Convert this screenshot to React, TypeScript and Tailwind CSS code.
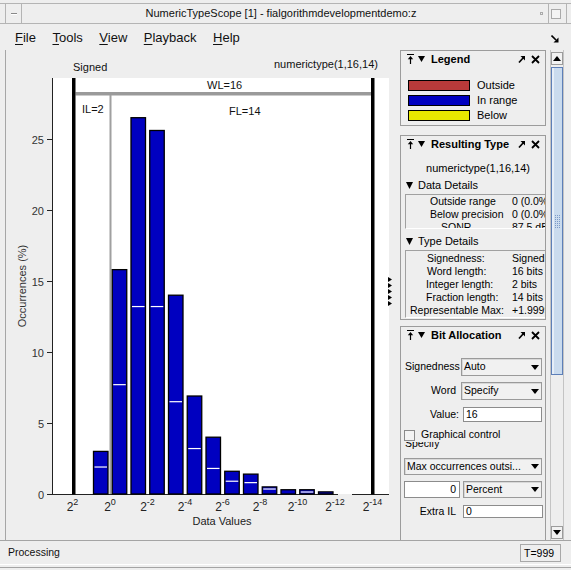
import React from "react";

const Y0 = 494;
const K = 14.2;
const bars = [3.0, 15.8, 26.5, 25.6, 14.0, 6.9, 4.0, 1.6, 1.4, 0.5, 0.3, 0.3, 0.15];
const marks: (number | null)[] = [1.9, 7.7, 13.2, 13.2, 6.5, 3.2, 1.8, 0.9, 0.8, 0.35, null, 0.14, null];
const exps = [2, 0, -2, -4, -6, -8, -10, -12, -14];

function Chart() {
  const ff = "'Liberation Sans', Arial, sans-serif";
  return (
    <svg width={393} height={490} viewBox="6 50 393 490" style={{ fontFamily: ff }} className="block">
      <text x={73} y={71} fontSize={11} fill="#111">Signed</text>
      <text x={274} y={67.5} fontSize={11} fill="#111">numerictype(1,16,14)</text>
      <rect x={53} y={78} width={336} height={416} fill="#ffffff" />
      {/* axes */}
      <line x1={52.5} y1={78} x2={52.5} y2={495} stroke="#222" strokeWidth={1} />
      <line x1={52} y1={494.5} x2={338} y2={494.5} stroke="#222" strokeWidth={1} />
      <line x1={352} y1={494.5} x2={389} y2={494.5} stroke="#222" strokeWidth={1} />
      {[0, 5, 10, 15, 20, 25].map((v) => {
        const y = Y0 - v * K + 0.5;
        return (
          <g key={v}>
            <line x1={47} y1={y} x2={52} y2={y} stroke="#222" strokeWidth={1} />
            <text x={44} y={y + 4} fontSize={11} textAnchor="end" fill="#333">{v}</text>
          </g>
        );
      })}
      {/* WL / IL / FL markers */}
      <rect x={75.5} y={92} width={295.5} height={3.5} fill="#9a9a9a" />
      <rect x={109.5} y={95} width={2} height={399} fill="#a0a0a0" />
      <rect x={72} y={78} width={3.5} height={416.5} fill="#000" />
      <rect x={371} y={78} width={3.5} height={416.5} fill="#000" />
      <text x={207} y={89} fontSize={11} fill="#111">WL=16</text>
      <text x={82} y={113} fontSize={11} fill="#111">IL=2</text>
      <text x={229} y={115} fontSize={11} fill="#111">FL=14</text>
      {/* bars */}
      {bars.map((h, i) => {
        const x = 93.5 + 18.75 * i;
        const y = Y0 - h * K;
        const m = marks[i];
        return (
          <g key={i}>
            <rect x={x} y={y} width={14.5} height={Y0 - y} fill="#0000c0" stroke="#000" strokeWidth={1.3} />
            {m !== null && (
              <line x1={x + 1} y1={Y0 - m * K} x2={x + 13.5} y2={Y0 - m * K} stroke="#fff" strokeWidth={1.2} />
            )}
          </g>
        );
      })}
      {/* x tick labels */}
      {exps.map((e) => {
        const x = 110 - e * 18.75;
        return (
          <text key={e} x={x} y={511} fontSize={12} textAnchor="middle" fill="#222">
            2
            <tspan fontSize={9} dy={-6}>{e}</tspan>
          </text>
        );
      })}
      <text x={222} y={525} fontSize={11} textAnchor="middle" fill="#222">Data Values</text>
      <text transform="translate(25.5,286) rotate(-90)" fontSize={11} textAnchor="middle" fill="#333">
        Occurrences (%)
      </text>
      {/* splitter arrows */}
      {[279.5, 285.5, 291.5, 297.5, 303.5].map((y) => (
        <polygon key={y} points={`388,${y - 2.5} 392,${y} 388,${y + 2.5}`} fill="#000" />
      ))}
    </svg>
  );
}

function PinIcon() {
  return (
    <svg width="7" height="10" viewBox="0 0 7 10" className="block">
      <path d="M0 0.5H7" stroke="#000" strokeWidth="1" />
      <path d="M3.5 2L0.8 5.2H6.2Z" fill="#000" />
      <path d="M3.5 4.5V10" stroke="#000" strokeWidth="1.2" />
    </svg>
  );
}

function TriDown({ w = 7, h = 6 }: { w?: number; h?: number }) {
  return (
    <svg width={w} height={h} viewBox={`0 0 ${w} ${h}`} className="block">
      <path d={`M0 0H${w}L${w / 2} ${h}Z`} fill="#000" />
    </svg>
  );
}

function UndockIcon() {
  return (
    <svg width="7" height="8" viewBox="0 0 7 8" className="block">
      <path d="M1 7.5L5.5 2.5" stroke="#000" strokeWidth="1.6" />
      <path d="M2.5 1H7V5.5Z" fill="#000" />
    </svg>
  );
}

function CloseIcon() {
  return (
    <svg width="9" height="9" viewBox="0 0 9 9" className="block">
      <path d="M1 1L8 8M8 1L1 8" stroke="#000" strokeWidth="1.8" />
    </svg>
  );
}

function PanelHeader({ title }: { title: string }) {
  return (
    <div className="h-[16px] flex items-center">
      <div className="ml-[6px]">
        <PinIcon />
      </div>
      <div className="ml-[4px]">
        <TriDown />
      </div>
      <span className="ml-[6px] font-bold text-[11px] leading-[14px]">{title}</span>
      <span className="flex-1" />
      <UndockIcon />
      <div className="ml-[6px] mr-[5px]">
        <CloseIcon />
      </div>
    </div>
  );
}

function Select({ label, className }: { label: string; className: string }) {
  return (
    <div className={`flex items-center border border-[#9a9a9a] bg-[#f1f1f1] shadow-[inset_1px_1px_0_#d8d8d8] ${className}`}>
      <span className="flex-1 pl-[2px] whitespace-nowrap overflow-hidden">{label}</span>
      <div className="mr-[2px]">
        <TriDown w={8} h={5} />
      </div>
    </div>
  );
}

function LegendRow({ color, label }: { color: string; label: string }) {
  return (
    <div className="flex items-center h-[11px]">
      <div className={`ml-[7px] w-[62px] h-[11px] border border-black ${color}`} />
      <span className="ml-[7px] text-[11px] leading-[11px]">{label}</span>
    </div>
  );
}

export default function App() {
  return (
    <div className="w-[571px] h-[570px] bg-[#eeeeee] font-['Liberation_Sans',Arial,sans-serif] text-black overflow-hidden flex flex-col">
      {/* title bar */}
      <div className="h-[25px] flex flex-col">
        <div className="mt-[3px] h-[21px] border-y border-[#b4b4b4] flex items-stretch">
          <div className="ml-[5px] w-[17px] border-x border-[#b4b4b4] flex items-center justify-center">
            <div className="w-[6px] h-[2px] border-t border-b border-t-[#888] border-b-[#fff]" />
          </div>
          <div className="flex-1 text-center text-[11px] leading-[19px] text-[#111]">
            NumericTypeScope [1] - fialgorithmdevelopmentdemo:z
          </div>
          <div className="w-[3px] flex items-center mr-[5px]">
            <div className="w-[3px] h-[3px] border border-[#aaa]" />
          </div>
          <div className="w-[15px] border-l border-[#b4b4b4] flex items-center justify-center">
            <div className="w-[10px] h-[10px] border border-[#aaa] bg-[#f4f4f4]" />
          </div>
          <div className="w-[4px] border-r border-[#b4b4b4]" />
          <div className="w-[4px]" />
        </div>
      </div>
      {/* menu bar */}
      <div className="h-[25px] flex items-center text-[13px] text-[#111] pl-[15px] gap-[16.5px]">
        <span>
          <span className="underline underline-offset-2">F</span>ile
        </span>
        <span>
          <span className="underline underline-offset-2">T</span>ools
        </span>
        <span>
          <span className="underline underline-offset-2">V</span>iew
        </span>
        <span>
          <span className="underline underline-offset-2">P</span>layback
        </span>
        <span>
          <span className="underline underline-offset-2">H</span>elp
        </span>
        <span className="flex-1" />
        <svg width="8" height="8" viewBox="0 0 8 8" className="mr-[12px] mt-[2px]">
          <path d="M0.5 0.5L5 5" stroke="#000" strokeWidth="1.6" />
          <path d="M7.5 2.5V7.5H2.5Z" fill="#000" />
        </svg>
      </div>
      {/* main */}
      <div className="flex h-[490px]">
        <div className="ml-[5px] w-[394px] border-l border-[#a6a6a6]">
          <Chart />
        </div>
        <div className="w-[148px] h-full overflow-hidden flex flex-col pl-[1px]">
          {/* Legend */}
          <div className="w-[146px] shrink-0 border border-[#9c9c9c] pb-[4px]">
            <PanelHeader title="Legend" />
            <div className="mt-[13px] flex flex-col gap-[4px]">
              <LegendRow color="bg-[#b83a3a]" label="Outside" />
              <LegendRow color="bg-[#0000c0]" label="In range" />
              <LegendRow color="bg-[#e8e800]" label="Below" />
            </div>
          </div>
          {/* Resulting Type */}
          <div className="mt-[9px] w-[146px] shrink-0 border border-[#9c9c9c] pb-[1px] text-[10.5px]">
            <PanelHeader title="Resulting Type" />
            <div className="mt-[9px] h-[14px] leading-[14px] text-center pl-[10px] text-[11px]">numerictype(1,16,14)</div>
            <div className="mt-[3px] h-[14px] flex items-center">
              <div className="ml-[5px]">
                <TriDown w={7} h={7} />
              </div>
              <span className="ml-[5px] text-[11px]">Data Details</span>
            </div>
            <div className="mt-[2px] ml-[4px] h-[35px] border-t border-l border-b border-t-[#a0a0a0] border-l-[#a0a0a0] border-b-white overflow-hidden">
              {[
                ["Outside range", "0 (0.0%)", "pl-[24px]"],
                ["Below precision", "0 (0.0%)", "pl-[24px]"],
                ["SQNR", "87.5 dB", "pl-[35px]"],
              ].map(([a, b, p]) => (
                <div key={a} className="flex h-[13px] leading-[13px] whitespace-nowrap">
                  <div className={`w-[106px] shrink-0 ${p}`}>{a}</div>
                  <div>{b}</div>
                </div>
              ))}
            </div>
            <div className="mt-[5px] h-[14px] flex items-center">
              <div className="ml-[5px]">
                <TriDown w={7} h={7} />
              </div>
              <span className="ml-[5px] text-[11px]">Type Details</span>
            </div>
            <div className="mt-[2px] ml-[4px] h-[68px] pt-[1px] border-t border-l border-b border-t-[#a0a0a0] border-l-[#a0a0a0] border-b-white overflow-hidden">
              {[
                ["Signedness:", "Signed", "pl-[21px]"],
                ["Word length:", "16 bits", "pl-[21px]"],
                ["Integer length:", "2 bits", "pl-[20px]"],
                ["Fraction length:", "14 bits", "pl-[20px]"],
                ["Representable Max:", "+1.9999", "pl-[4px]"],
              ].map(([a, b, p]) => (
                <div key={a} className="flex h-[13px] leading-[13px] whitespace-nowrap">
                  <div className={`w-[106px] shrink-0 ${p}`}>{a}</div>
                  <div>{b}</div>
                </div>
              ))}
            </div>
          </div>
          {/* Bit Allocation */}
          <div className="mt-[6px] w-[146px] shrink-0 h-[260px] border border-[#9c9c9c] text-[10.5px] pl-[3px]">
            <div className="-ml-[3px]">
              <PanelHeader title="Bit Allocation" />
            </div>
            <div className="mt-[15px] flex items-center h-[18px]">
              <span className="w-[57px] pl-[1px] whitespace-nowrap">Signedness</span>
              <Select label="Auto" className="w-[81px] h-[18px]" />
            </div>
            <div className="mt-[6px] flex items-center h-[18px]">
              <span className="w-[57px] pr-[5px] text-right">Word</span>
              <Select label="Specify" className="w-[81px] h-[18px]" />
            </div>
            <div className="mt-[7px] flex items-center h-[15px]">
              <span className="w-[56px] pr-[1px] text-right">Value:</span>
              <div className="ml-[3px] w-[79px] h-[15px] border border-[#8c8c8c] bg-white leading-[13px] pl-[2px]">16</div>
            </div>
            <div className="mt-[7px] flex items-center h-[12px]">
              <div className="w-[11px] h-[11px] border border-[#8a8a8a] bg-[#f3f3f3]" />
              <span className="ml-[6px]">Graphical control</span>
            </div>
            <div className="h-[9px] mt-[1px] overflow-hidden pl-[1px]">
              <div className="-mt-[5px] leading-[13px]">Specify</div>
            </div>
            <div className="mt-[7px] flex">
              <Select label="Max occurrences outsi..." className="w-[138px] h-[17px]" />
            </div>
            <div className="mt-[6px] flex items-center h-[17px]">
              <div className="w-[56px] h-[17px] border border-[#8c8c8c] bg-white text-right pr-[3px] leading-[15px]">0</div>
              <Select label="Percent" className="ml-[3px] w-[79px] h-[17px]" />
            </div>
            <div className="mt-[7px] flex items-center h-[13px]">
              <span className="w-[56px] pr-[4px] text-right">Extra IL</span>
              <div className="ml-[3px] w-[80px] h-[13px] border border-[#8c8c8c] bg-white leading-[11px] pl-[2px]">0</div>
            </div>
          </div>
        </div>
        {/* scrollbar */}
        <div className="ml-[3px] w-[14px] flex flex-col border-l border-r border-[#c4c4c4]">
          <div className="mt-[2px] h-[13px] border border-[#9c9c9c] bg-[#f2f2f2] flex items-center justify-center">
            <svg width="8" height="5" viewBox="0 0 8 5">
              <path d="M0 5H8L4 0Z" fill="#000" />
            </svg>
          </div>
          <div className="mt-[2px] h-[308px] border border-[#5d7fb8] bg-[#cadbee] shadow-[inset_2px_0_0_#e6eef8] flex items-center justify-center">
            <div className="grid grid-cols-3 gap-[1px] opacity-70">
              {Array.from({ length: 21 }).map((_, i) => (
                <div key={i} className="w-[1px] h-[1px] bg-[#5d7fb8]" />
              ))}
            </div>
          </div>
          <div className="flex-1" />
          <div className="h-[13px] mb-[1px] border border-[#9c9c9c] bg-[#f2f2f2] flex items-center justify-center">
            <svg width="8" height="5" viewBox="0 0 8 5">
              <path d="M0 0H8L4 5Z" fill="#000" />
            </svg>
          </div>
        </div>
        <div className="flex-1" />
      </div>
      {/* status bar */}
      <div className="h-[24px] border-t border-[#a4a4a4] flex items-center">
        <span className="ml-[8px] text-[10.5px] text-[#111]">Processing</span>
        <span className="flex-1" />
        <div className="mr-[10px] w-[41px] h-[18px] border border-[#a8a8a8] text-[10.5px] leading-[16px] pl-[3px]">T=999</div>
      </div>
      <div className="h-[6px] border-t border-white">
        <div className="mt-[2px] border-t border-[#a4a4a4]" />
      </div>
    </div>
  );
}
